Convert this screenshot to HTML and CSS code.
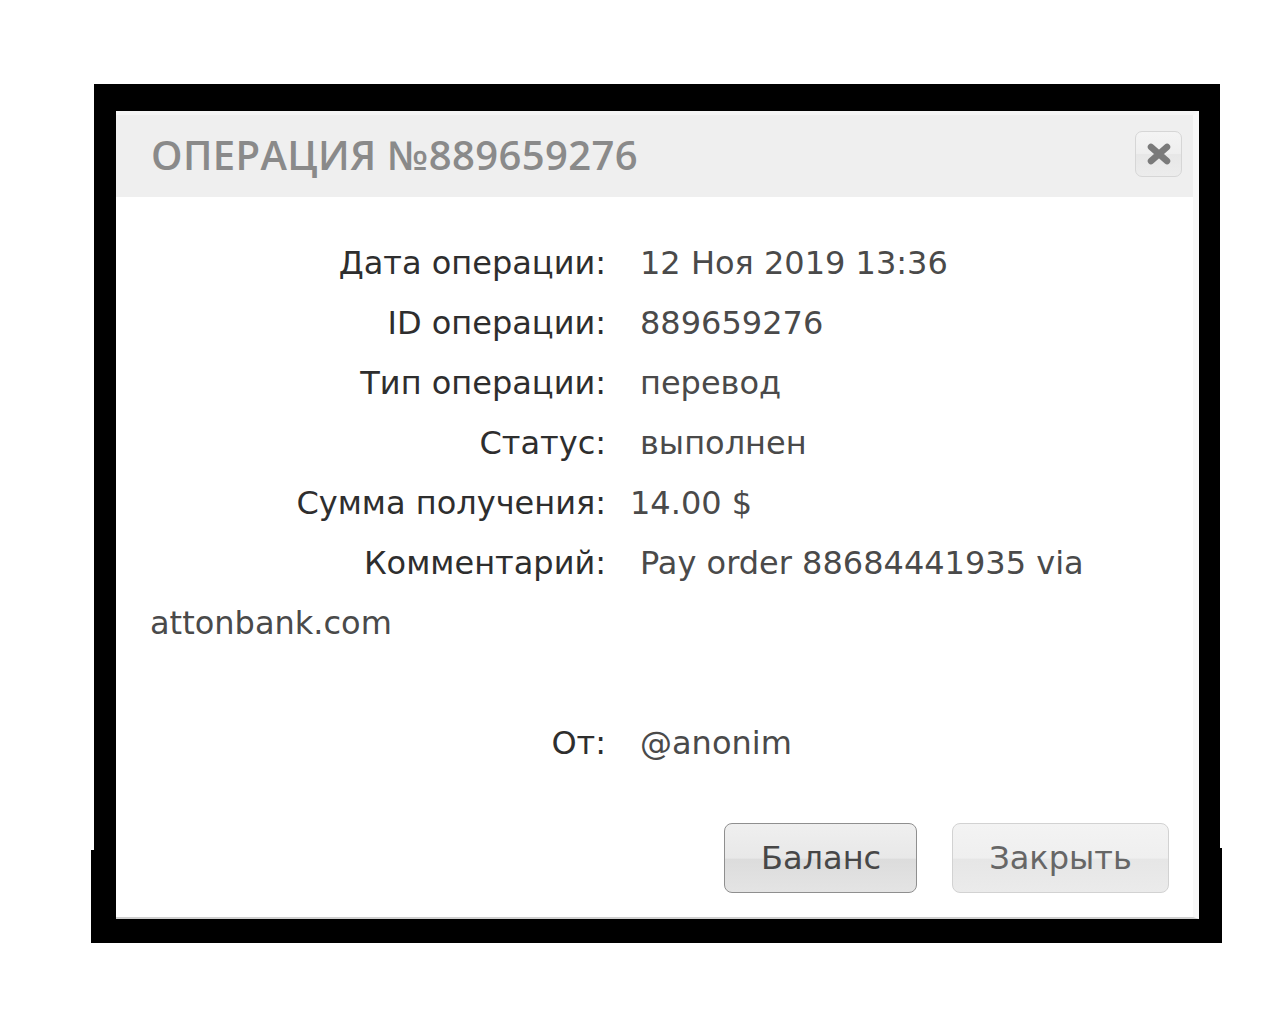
FILE: index.html
```html
<!DOCTYPE html>
<html lang="ru">
<head>
<meta charset="utf-8">
<title>Операция №889659276</title>
<link rel="stylesheet" href="styles.css">
</head>
<body>
<div class="page">
  <div class="frame">
    <div class="dialog">
      <div class="dialog-header">
        <h1 class="dialog-title">ОПЕРАЦИЯ №889659276</h1>
        <button class="close-btn" aria-label="Закрыть">
          <svg width="24" height="22" viewBox="0 0 24 22"><path d="M4 4 L20 18 M20 4 L4 18" stroke="#7a7a7a" stroke-width="6.5" stroke-linecap="round"/></svg>
        </button>
      </div>
      <div class="dialog-body">
        <div class="row"><span class="label">Дата операции:</span><span class="value">12 Ноя 2019 13:36</span></div>
        <div class="row"><span class="label">ID операции:</span><span class="value">889659276</span></div>
        <div class="row"><span class="label">Тип операции:</span><span class="value">перевод</span></div>
        <div class="row"><span class="label">Статус:</span><span class="value">выполнен</span></div>
        <div class="row"><span class="label">Сумма получения:</span><span class="value value-tight">14.00 $</span></div>
        <div class="row"><span class="label">Комментарий:</span><span class="value">Pay order 88684441935 via</span> <span class="value-cont">attonbank.com</span></div>
        <div class="row row-empty"></div>
        <div class="row"><span class="label">От:</span><span class="value">@anonim</span></div>
        <div class="actions">
          <button class="btn btn-primary">Баланс</button>
          <button class="btn btn-secondary">Закрыть</button>
        </div>
      </div>
    </div>
  </div>
</div>
</body>
</html>
```
FILE: styles.css
```css
html, body {
  margin: 0;
  padding: 0;
  background: #ffffff;
}

.page {
  padding: 84px 0 0 94px;
}

.frame {
  position: relative;
  box-sizing: border-box;
  width: 1126px;
  height: 859px;
  background: #000;
  padding: 27px 21px 24px 22px;
}

.frame::before {
  content: "";
  position: absolute;
  left: -3px;
  top: 766px;
  bottom: 0;
  width: 3px;
  background: #000;
}

.frame::after {
  content: "";
  position: absolute;
  right: -2px;
  top: 764px;
  bottom: 0;
  width: 2px;
  background: #000;
}

.dialog {
  box-sizing: border-box;
  height: 808px;
  background: #fff;
  border-top: 4px solid #f5f5f5;
  border-right: 6px solid #f8f8f8;
  border-bottom: 2px solid #cfcfcf;
  display: flex;
  flex-direction: column;
}

.dialog-header {
  height: 82px;
  background: #efefef;
  display: flex;
  align-items: center;
  justify-content: space-between;
  padding: 0 11px 0 35px;
}

.dialog-title {
  margin: 0;
  font-family: "Open Sans", "DejaVu Sans", sans-serif;
  font-weight: 600;
  font-size: 40px;
  letter-spacing: 0.4px;
  color: #8a8a8a;
  line-height: 1;
  margin-top: -2px;
}

.close-btn {
  width: 47px;
  height: 46px;
  padding: 0;
  margin-top: -4px;
  border: 1px solid #d6d6d6;
  border-radius: 7px;
  background: linear-gradient(#f4f4f4, #eeeeee 50%, #e7e7e7 51%, #ececec);
  display: flex;
  align-items: center;
  justify-content: center;
}

.dialog-body {
  padding: 36px 24px 0 34px;
  font-family: "DejaVu Sans", sans-serif;
  font-size: 32px;
  line-height: 60px;
}

.row {
  min-height: 60px;
}

.label {
  display: inline-block;
  width: 456px;
  text-align: right;
  color: #2e2e2e;
}

.value {
  margin-left: 34px;
  color: #4a4a4a;
}

.value-cont {
  color: #4a4a4a;
}

.value-tight {
  margin-left: 24px;
}

.actions {
  display: flex;
  justify-content: flex-end;
  gap: 35px;
  margin-top: 50px;
}

.btn {
  height: 70px;
  padding: 0 36px;
  font-family: "DejaVu Sans", sans-serif;
  font-size: 32px;
  border-radius: 8px;
}

.btn-primary {
  width: 193px;
  color: #474747;
  border: 1.5px solid #8f8f8f;
  background: linear-gradient(#efefef, #e8e8e8 50%, #dcdcdc 52%, #e4e4e4);
}

.btn-secondary {
  width: 217px;
  color: #666;
  border: 1.5px solid #d2d2d2;
  background: linear-gradient(#f3f3f3, #efefef 50%, #e6e6e6 52%, #ebebeb);
}
```
